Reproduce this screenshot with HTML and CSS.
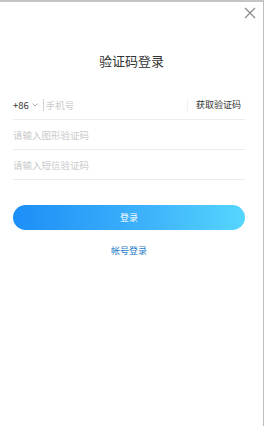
FILE: index.html
```html
<!DOCTYPE html>
<html lang="zh-CN">
<head>
<meta charset="utf-8">
<link rel="stylesheet" href="styles.css">
</head>
<body>
<div class="page">
  <div class="topbar">
    <svg class="close" width="12" height="12" viewBox="0 0 12 12"><path d="M1 1L11 11M11 1L1 11" stroke="#8a8a8a" stroke-width="1.2" fill="none"/></svg>
  </div>
  <h1 class="title">验证码登录</h1>
  <form class="form">
    <div class="row">
      <span class="code">+86</span>
      <svg class="chev" width="6" height="4" viewBox="0 0 6 4"><path d="M0.5 0.5L3 3L5.5 0.5" stroke="#999" stroke-width="0.8" fill="none"/></svg>
      <span class="cursor"></span>
      <span class="ph grow">手机号</span>
      <span class="divider"></span>
      <span class="getcode">获取验证码</span>
    </div>
    <div class="row">
      <span class="ph">请输入图形验证码</span>
    </div>
    <div class="row">
      <span class="ph">请输入短信验证码</span>
    </div>
    <button class="btn" type="button">登录</button>
    <a class="link">帐号登录</a>
  </form>
</div>
</body>
</html>
```
FILE: styles.css
```css
html, body {
  margin: 0;
  padding: 0;
  background: #fff;
}
body {
  font-family: "Noto Sans CJK SC", "Noto Sans", sans-serif;
}
.page {
  width: 263px;
  height: 424px;
  border-top: 2px solid #c4c4c4;
  border-right: 1px solid #bdbdbd;
  box-sizing: content-box;
  display: flex;
  flex-direction: column;
}
.topbar {
  display: flex;
  justify-content: flex-end;
  padding: 5px 7px 0 0;
  height: 15px;
}
.close {
  display: block;
}
.title {
  margin: 29px 0 0;
  text-align: center;
  font-size: 13px;
  font-weight: 400;
  color: #333;
  line-height: 20px;
}
.form {
  margin: 19px 0 0;
  padding: 0 18px 0 13px;
  display: flex;
  flex-direction: column;
}
.row {
  height: 29px;
  border-bottom: 1px solid #ececec;
  display: flex;
  align-items: center;
  font-size: 9.5px;
  line-height: 14px;
}
.code {
  color: #333;
}
.chev {
  margin-left: 3px;
}
.cursor {
  width: 1px;
  height: 12px;
  background: #d0d4da;
  margin-left: 5px;
  margin-right: 2px;
}
.ph {
  color: #cacaca;
}
.grow {
  flex: 1;
}
.divider {
  width: 1px;
  height: 12px;
  background: #f0f0f0;
  margin-right: 8px;
}
.getcode {
  color: #333;
  font-size: 9px;
  margin-right: 4px;
}
.btn {
  margin-top: 25px;
  height: 25px;
  border: none;
  border-radius: 13px;
  background: linear-gradient(90deg, #1c8ef7 0%, #3fb4fb 60%, #55d6fd 100%);
  color: #fff;
  font-family: inherit;
  font-size: 9px;
  padding: 0;
}
.link {
  margin-top: 14px;
  text-align: center;
  color: #1b78c8;
  font-size: 9px;
  line-height: 14px;
}
```
